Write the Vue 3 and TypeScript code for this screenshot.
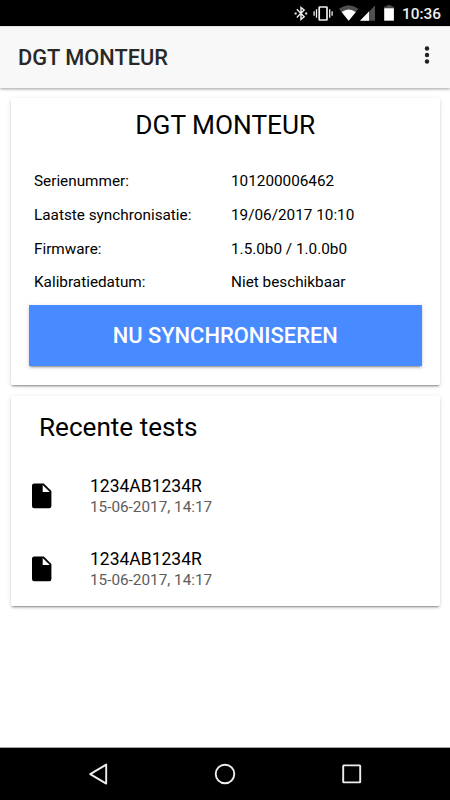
<script setup lang="ts">
interface DeviceDetail {
  label: string
  value: string
}

interface RecentTest {
  id: number
  code: string
  date: string
}

const details: DeviceDetail[] = [
  { label: 'Serienummer:', value: '101200006462' },
  { label: 'Laatste synchronisatie:', value: '19/06/2017 10:10' },
  { label: 'Firmware:', value: '1.5.0b0 / 1.0.0b0' },
  { label: 'Kalibratiedatum:', value: 'Niet beschikbaar' },
]

const tests: RecentTest[] = [
  { id: 1, code: '1234AB1234R', date: '15-06-2017, 14:17' },
  { id: 2, code: '1234AB1234R', date: '15-06-2017, 14:17' },
]
</script>

<template>
  <div class="screen">
    <div class="status-bar">
      <svg class="status-icons" width="102" height="26" viewBox="0 0 102 26">
        <!-- bluetooth -->
        <path d="M2.8 9.2L10.2 16.7L7 19.4V7.4L10.2 10.1L2.8 17.6" fill="none" stroke="#eee" stroke-width="1.4" />
        <path d="M.6 12.4h2v2h-2zM11.2 12.4h2v2h-2z" fill="#eee" />
        <!-- vibrate -->
        <rect x="25.2" y="7" width="7.8" height="13" rx=".4" fill="none" stroke="#eee" stroke-width="1.7" />
        <path d="M22.5 9.3v8.4M20.1 11.2v4.6M35.7 9.3v8.4M38.1 11.2v4.6" stroke="#eee" stroke-width="1.3" />
        <!-- wifi -->
        <path d="M45 8.8Q54.7 1.8 64.4 8.8L54.7 20.7Z" fill="#4f4f4f" />
        <path d="M47.6 12Q54.7 6.8 61.8 12L54.7 20.7Z" fill="#fff" />
        <!-- signal -->
        <path d="M66 20.7L81 5.5V20.7Z" fill="#4f4f4f" />
        <path d="M66 20.7L75 11.6V20.7Z" fill="#fff" />
        <!-- battery -->
        <path d="M90.2 6.6h2.6V5.2h4.5v1.4h2.6v3h-9.7z" fill="#4f4f4f" />
        <path d="M90.2 8.3h9.7v12.4h-9.7z" fill="#fff" />
      </svg>
      <span class="clock">10:36</span>
    </div>

    <header class="toolbar">
      <h1 class="toolbar-title">DGT MONTEUR</h1>
      <button class="menu-button" type="button" aria-label="Menu">
        <svg width="6" height="20" viewBox="0 0 6 20">
          <circle cx="3" cy="3.5" r="2.2" />
          <circle cx="3" cy="10" r="2.2" />
          <circle cx="3" cy="16.5" r="2.2" />
        </svg>
      </button>
    </header>

    <main class="content">
      <section class="card device-card">
        <h2 class="device-title">DGT MONTEUR</h2>
        <dl class="details">
          <div v-for="detail in details" :key="detail.label" class="detail">
            <dt>{{ detail.label }}</dt>
            <dd>{{ detail.value }}</dd>
          </div>
        </dl>
        <button class="sync-button" type="button">NU SYNCHRONISEREN</button>
      </section>

      <section class="card tests-card">
        <h2 class="tests-title">Recente tests</h2>
        <ul class="tests">
          <li v-for="test in tests" :key="test.id" class="test">
            <svg class="file-icon" width="20" height="26" viewBox="0 0 20 26">
              <path
                fill-rule="evenodd"
                d="M2.2 .4H11.8L19.4 8.1V23Q19.4 25.2 17.2 25.2H2.2Q0 25.2 0 23V2.6Q0 .4 2.2 .4ZM10.7 2.1V9H17.8Z"
              />
            </svg>
            <div>
              <h3 class="test-code">{{ test.code }}</h3>
              <p class="test-date">{{ test.date }}</p>
            </div>
          </li>
        </ul>
      </section>
    </main>

    <nav class="nav-bar">
      <svg width="22" height="22" viewBox="0 0 22 22">
        <path d="M18.2 1.6V20.6L2.2 11.1Z" />
      </svg>
      <svg width="22" height="22" viewBox="0 0 22 22">
        <circle cx="11" cy="11" r="9.3" />
      </svg>
      <svg width="22" height="22" viewBox="0 0 22 22">
        <rect x="2.2" y="2.4" width="17" height="17" rx=".6" />
      </svg>
    </nav>
  </div>
</template>

<style>
body {
  margin: 0;
  background: #fff;
}
</style>

<style scoped>
.screen {
  display: flex;
  flex-direction: column;
  width: 450px;
  height: 800px;
  overflow: hidden;
  background: #fff;
  color: #000;
  font-family: Roboto, 'Liberation Sans', sans-serif;
}

h1,
h2,
h3,
p,
dl,
dd,
ul {
  margin: 0;
  padding: 0;
  font-weight: 400;
}

button {
  border: 0;
  padding: 0;
  font-family: inherit;
}

.status-bar {
  display: flex;
  flex: none;
  align-items: center;
  justify-content: space-between;
  height: 26px;
  padding: 0 9px 0 294px;
  background: #000;
}

.status-icons {
  flex: none;
}

.clock {
  padding-top: 2px;
  color: #eee;
  font-size: 15.4px;
  font-weight: 500;
  line-height: 26px;
}

.toolbar {
  display: flex;
  flex: none;
  align-items: center;
  justify-content: space-between;
  height: 62px;
  box-sizing: border-box;
  padding: 0 20.5px 0 18px;
  border-top: 1px solid #e4e4e4;
  background: #f8f8f8;
  box-shadow: 0 1px 3px rgba(0, 0, 0, 0.38);
}

.toolbar-title {
  color: #282828;
  font-size: 21.8px;
  font-weight: 500;
  line-height: 61px;
}

.menu-button {
  display: flex;
  margin-top: -5px;
  background: none;
  fill: #222;
}

.content {
  display: flex;
  flex: 1;
  flex-direction: column;
  gap: 11px;
  padding: 10px 10px 0 11px;
}

.card {
  box-sizing: border-box;
  border-radius: 2px;
  background: #fff;
  box-shadow:
    0 2px 2px rgba(0, 0, 0, 0.14),
    0 3px 1px -2px rgba(0, 0, 0, 0.2),
    0 1px 5px rgba(0, 0, 0, 0.12);
}

.device-card {
  height: 287px;
  padding: 10px 18px 0 17.5px;
}

.device-title {
  font-size: 26.25px;
  line-height: 34px;
  text-align: center;
}

.details {
  display: flex;
  flex-direction: column;
  padding: 23px 0 0 5.5px;
}

.detail {
  display: flex;
  height: 33.8px;
  font-size: 15.3px;
  line-height: 33.8px;
}

.detail dt {
  width: 197px;
}

.sync-button {
  width: 100%;
  height: 61px;
  margin-top: 5px;
  background: #488aff;
  color: #fff;
  font-size: 21.9px;
  font-weight: 500;
  line-height: 61px;
  box-shadow:
    0 2px 2px rgba(0, 0, 0, 0.14),
    0 3px 1px -2px rgba(0, 0, 0, 0.2),
    0 1px 5px rgba(0, 0, 0, 0.12);
}

.tests-card {
  height: 210px;
  padding: 13px 20px 0 21px;
}

.tests-title {
  padding-left: 7px;
  font-size: 26.1px;
  line-height: 36px;
}

.tests {
  padding-top: 15px;
  list-style: none;
}

.test {
  display: flex;
  align-items: center;
  gap: 38px;
  height: 73px;
}

.file-icon {
  flex: none;
  margin-bottom: 2px;
}

.test-code {
  font-size: 17.5px;
  line-height: 21px;
}

.test-date {
  color: #5c5c5c;
  font-size: 15.3px;
  line-height: 21px;
}

.nav-bar {
  display: flex;
  flex: none;
  align-items: center;
  justify-content: space-between;
  height: 53px;
  box-sizing: border-box;
  padding: 0 87.5px;
  border-top: 1px solid #a6a6a6;
  background: #000;
  fill: none;
  stroke: #eee;
  stroke-linejoin: round;
  stroke-width: 1.9;
}
</style>
